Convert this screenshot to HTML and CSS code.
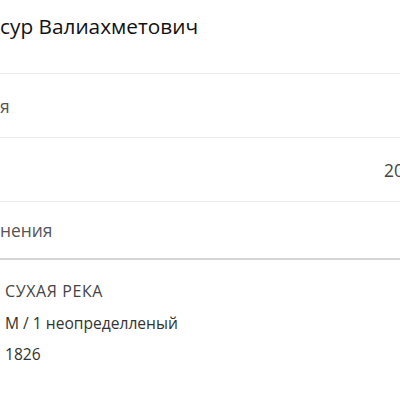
FILE: index.html
```html
<!DOCTYPE html>
<html lang="ru">
<head>
  <meta charset="UTF-8" />
  <meta name="viewport" content="width=device-width, initial-scale=1.0"/>
  <title>Карточка</title>
  <link rel="stylesheet" href="styles.css">
</head>
<body>
  <div class="title">сур Валиахметович</div>

  <div class="rows">
    <div class="row"><span class="label">я</span></div>
    <div class="row"><span class="label"></span><span class="value">20</span></div>
    <div class="row last"><span class="label">нения</span></div>
  </div>

  <div class="burial">
    <div class="place">СУХАЯ РЕКА</div>
    <div class="grave">М / 1 неопределленый</div>
    <div>1826</div>
  </div>
</body>
</html>
```

FILE: styles.css
```css
body {
  font-family: 'Open Sans', sans-serif;
  margin: 0;
  padding: 0;
  background: #fff;
  color: #222;
  overflow: hidden;
}
.title {
  font-size: 20.8px;
  color: #111;
  height: 73px;
  line-height: 52px;
  white-space: nowrap;
}
.rows {
  border-top: 1px solid #ececec;
}
.row {
  display: flex;
  justify-content: space-between;
  align-items: center;
  height: 63px;
  border-bottom: 1px solid #ececec;
  font-size: 17.4px;
  color: #555;
  white-space: nowrap;
}
.row.last {
  height: 56px;
  border-bottom: 2px solid #d6d6d6;
}
.value {
  color: #444;
  margin-right: -4px;
}
.burial {
  padding: 16px 0 0 5px;
  font-size: 15.6px;
  color: #333;
  line-height: 31px;
}
.place {
  color: #444;
  letter-spacing: 0.6px;
  font-size: 16px;
}
.grave {
  line-height: 32px;
}
```
